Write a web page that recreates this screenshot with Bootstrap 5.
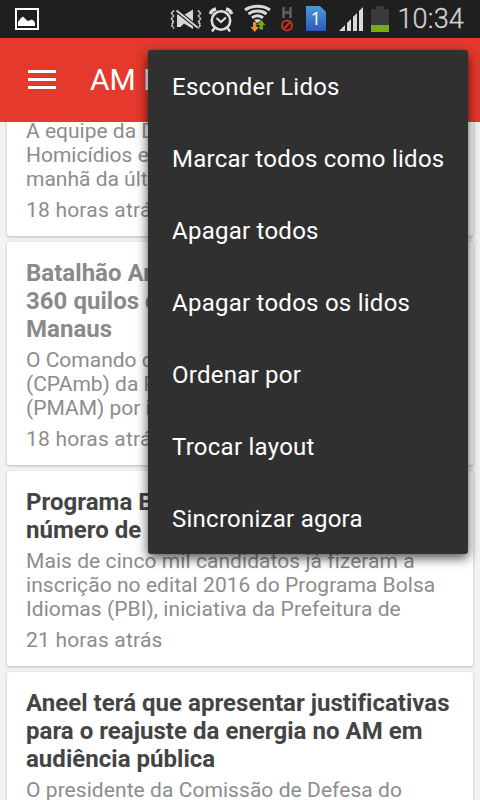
<!DOCTYPE html>
<html lang="pt-BR">
<head>
<meta charset="utf-8">
<meta name="viewport" content="width=device-width, initial-scale=1">
<title>AM</title>
<link href="https://cdn.jsdelivr.net/npm/bootstrap@5.3.0/dist/css/bootstrap.min.css" rel="stylesheet">
<style>
body{font-family:Roboto,sans-serif;background:#f3f3f3;height:800px}
.status-bar{height:38px;background:#1f1f1f;color:#d2d2d2;z-index:3}
.status-bar svg{flex:none;display:block}
.clock-text{font-size:27px;line-height:39px;font-weight:300;-webkit-text-stroke:.3px #d2d2d2;letter-spacing:.2px;margin-left:7px;padding-right:16px}
.app-bar{height:84px;background:#e5392d;color:#fff;z-index:2;padding-left:28px;font-size:30px;line-height:84px}
.bars{width:28px;height:19px;gap:5px;margin-right:34px;margin-top:-2px}
.bars span{height:3px;background:#fff}
.feed{padding:0 7px;gap:6px;margin-top:-3px}
.news{border:0;border-radius:3px;padding:17px 19px 14px;color:#8c8c8c;font-size:21px;line-height:24px;box-shadow:0 1px 3px rgba(0,0,0,.25);white-space:nowrap}
.news h2{font-size:24px;line-height:28px;font-weight:700;letter-spacing:.03px;margin:0 0 5px;color:#8a8a8a}
.news.unread h2{color:#444}
.news p{margin:0 0 7px}
.news.unread p{letter-spacing:.06px}
.news div{letter-spacing:.2px}
.news:first-child{padding-top:0}
.overflow-menu{display:block;left:148px;top:50px;width:320px;height:504px;background:#303030;border:0;border-radius:3px;padding:0;box-shadow:0 4px 12px rgba(0,0,0,.7);z-index:5}
.overflow-menu .dropdown-item{height:72px;line-height:72px;padding:1px 24px 0;color:#fff;font-size:24px;letter-spacing:.25px}
</style>
<script src="https://cdn.jsdelivr.net/npm/bootstrap@5.3.0/dist/js/bootstrap.bundle.min.js"></script>
</head>
<body class="overflow-hidden position-relative">
<header class="status-bar d-flex position-relative">
<svg width="39" height="38" viewBox="0 0 39 38"><path fill="none" stroke="#fff" stroke-width="2" d="M16 9h22v20H16z"/><path fill="#fff" d="M18 26v-4l3-4 2-1.500 3 3 1.500 1.500 2-.5 2-1 2 1 1.500 2v3.500z"/></svg>
<svg class="ms-auto" width="34" height="38" viewBox="169 0 34 38"><path fill="none" stroke="#cfcfcf" stroke-width="1.700" stroke-dasharray="2.400 .6" d="M174 10.500l-2.500 2.500 2 3-2 3 2 3-2 3 2.500 3.500M198 10.500l2.500 2.500-2 3 2 3-2 3 2 3-2.500 3.500"/><path fill="#d6d6d6" d="M177 14.500h1.500L193 26v3l-9-5.500-3.500 3.500H177zM184 15l9-5.500V21.500z"/><path d="M177 11l20 16" stroke="#1f1f1f" stroke-width="4"/><path d="M176.500 10.500l21 17" stroke="#d6d6d6" stroke-width="1.900"/></svg>
<svg width="35" height="38" viewBox="203 0 35 38"><g fill="none" stroke="#dcdcdc"><circle cx="221" cy="20.500" r="9.200" stroke-width="2.600"/><path stroke-width="2.200" d="M216.500 18l4.500 4 5-4.500"/><path stroke-width="3.400" d="M210.300 14c1-3 3-4.500 5.700-5M231.700 14c-1-3-3-4.500-5.700-5"/><path stroke-width="2.400" d="M214.500 28l-2.500 3.500M227.500 28l2.500 3.500"/></g></svg>
<svg width="38" height="38" viewBox="238 0 38 38"><g fill="none" stroke="#dadada" stroke-width="2.900"><path d="M245 10c7-5 18-5 25 0M248.500 14c5-4 13-4 18 0M252 17.800c3.500-2.500 7.500-2.500 11 0"/></g><path fill="#dadada" d="M254 20q3.500-1.500 7 0l-3.500 3z"/><path fill="#e89232" d="M253 22h3.500v5h2.500l-4.300 5-4.200-5h2.500z"/><path fill="#73a817" d="M259.500 29.500V25H257l4.200-5 4.300 5H263v4.500z"/></svg>
<svg width="25" height="38" viewBox="276 0 25 38"><path fill="none" stroke="#626262" stroke-width="2.400" d="M283.500 7v11M290.500 7v11M283 12.500h8"/><circle cx="287" cy="25.500" r="5" fill="none" stroke="#c92e20" stroke-width="2"/><path stroke="#c92e20" stroke-width="2" d="M283.500 29l7-7"/></svg>
<svg width="31" height="38" viewBox="301 0 31 38"><defs><linearGradient id="sim" x2="0" y2="1"><stop stop-color="#4b9bd5"/><stop offset="1" stop-color="#2c59bb"/></linearGradient></defs><path fill="url(#sim)" d="M306 6h14l6 6v19h-20z"/><text x="316" y="25" fill="#fff" font-size="18" text-anchor="middle" font-family="Open Sans, sans-serif">1</text></svg>
<svg width="34" height="38" viewBox="332 0 34 38"><path fill="#dadada" d="M339 31l6-6v6zM347 23l4-4v12h-4zM353 17l4-4v18h-4zM359 11l4-4v24h-4z"/></svg>
<svg width="24" height="38" viewBox="366 0 24 38"><path fill="#3a3a3a" d="M371 9h5V6h8v3h5v23h-18z"/><path fill="#7bab16" d="M371 25h18v7h-18z"/></svg>
<span class="clock-text">10:34</span>
</header>
<nav class="app-bar d-flex align-items-center position-relative">
<div class="bars d-flex flex-column"><span></span><span></span><span></span></div>
<span>AM N</span>
</nav>
<main class="feed d-flex flex-column">
<article class="card news"><p>A equipe da D<br>Homicídios e<br>manhã da últ</p><div>18 horas atrás</div></article>
<article class="card news"><h2>Batalhão Am<br>360 quilos d<br>Manaus</h2><p>O Comando d<br>(CPAmb) da P<br>(PMAM) por in</p><div>18 horas atrás</div></article>
<article class="card news unread"><h2>Programa B<br>número de</h2><p>Mais de cinco mil candidatos já fizeram a<br>inscrição no edital 2016 do Programa Bolsa<br>Idiomas (PBI), iniciativa da Prefeitura de</p><div>21 horas atrás</div></article>
<article class="card news unread"><h2>Aneel terá que apresentar justificativas<br>para o reajuste da energia no AM em<br>audiência pública</h2><p>O presidente da Comissão de Defesa do</p></article>
</main>
<div class="dropdown-menu overflow-menu show position-absolute">
<a class="dropdown-item">Esconder Lidos</a>
<a class="dropdown-item">Marcar todos como lidos</a>
<a class="dropdown-item">Apagar todos</a>
<a class="dropdown-item">Apagar todos os lidos</a>
<a class="dropdown-item">Ordenar por</a>
<a class="dropdown-item">Trocar layout</a>
<a class="dropdown-item">Sincronizar agora</a>
</div>
</body>
</html>
